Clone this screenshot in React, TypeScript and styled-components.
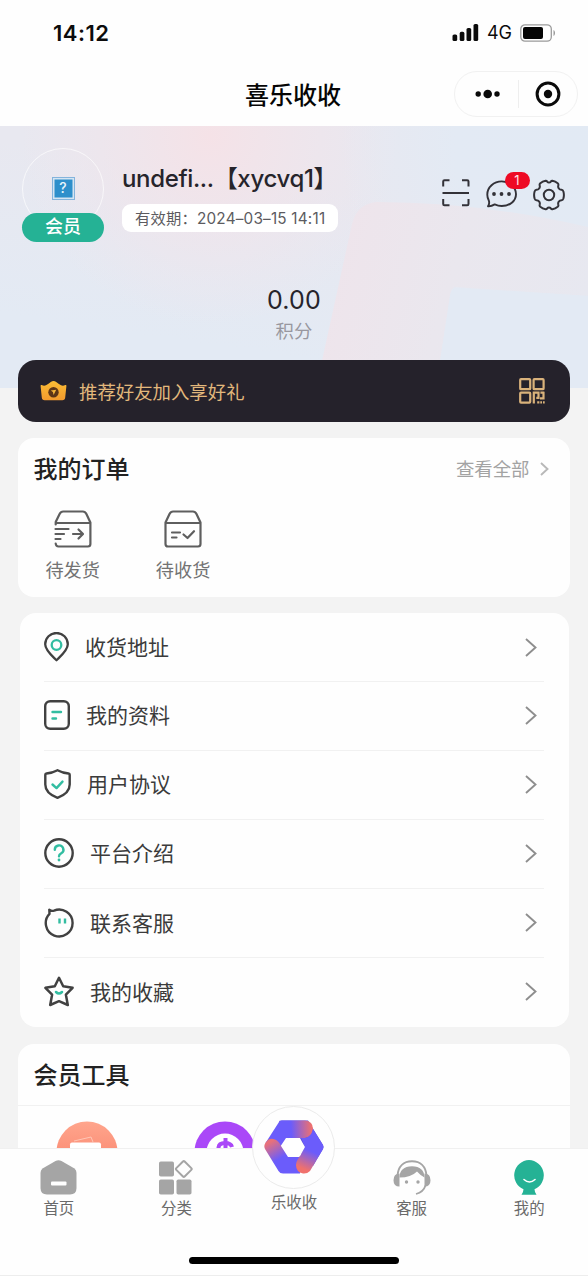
import React from "react";
import styled, { createGlobalStyle } from "styled-components";

const GlobalStyle = createGlobalStyle`
  * { box-sizing: border-box; }
  body {
    margin: 0;
    background: #f3f3f3;
    font-family: Inter, "Noto Sans CJK SC", sans-serif;
    color: #26242b;
  }
  svg { display: block; flex: none; }
`;

const Screen = styled.div`
  width: 588px;
  height: 1276px;
  display: flex;
  flex-direction: column;
  overflow: hidden;
  background: #f3f3f3;
`;

const StatusBar = styled.div`
  height: 65px;
  flex: none;
  display: flex;
  align-items: center;
  padding: 0 30px 0 53px;
  background: #fefefe;
  color: #0c0c0c;
`;

const Clock = styled.span`
  flex: 1;
  font-size: 22px;
  font-weight: 600;
  line-height: 30px;
  letter-spacing: 0.5px;
`;

const Network = styled.span`
  font-size: 18px;
  font-weight: 400;
  line-height: 30px;
  margin: 0 8px 0 8px;
`;

const NavBar = styled.div`
  height: 61px;
  flex: none;
  display: grid;
  grid-template-columns: 1fr auto 1fr;
  align-items: center;
  padding: 0 10px;
  background: #fefefe;
`;

const NavTitle = styled.h1`
  grid-column: 2;
  margin: 0 2px 0 0;
  font-size: 24px;
  line-height: 34px;
  font-weight: 500;
  color: #050505;
`;

const Capsule = styled.div`
  justify-self: end;
  width: 124px;
  height: 46px;
  margin-bottom: 3px;
  display: flex;
  align-items: center;
  border: 1px solid #f1f1f1;
  border-radius: 23px;
`;

const CapsuleHalf = styled.div`
  flex: 1;
  height: 28px;
  display: flex;
  align-items: center;
  justify-content: center;
  &:first-child { padding-left: 4px; }
  & + & { border-left: 1px solid #eeeeee; }
`;

const Hero = styled.section`
  position: relative;
  height: 262px;
  flex: none;
  background: #e8e8f0;
`;

const HeroArt = styled.svg`
  position: absolute;
  inset: 0;
`;

const HeroContent = styled.div`
  position: relative;
  display: flex;
  flex-direction: column;
`;

const Profile = styled.div`
  display: flex;
  height: 116px;
  padding: 22px 23.5px 0 22px;
`;

const Avatar = styled.div`
  width: 82px;
  height: 94px;
  display: flex;
  flex-direction: column;
  align-items: center;
`;

const AvatarRing = styled.div`
  width: 82px;
  height: 82px;
  flex: none;
  display: flex;
  align-items: center;
  justify-content: center;
  border: 1.5px solid rgba(255, 255, 255, 0.65);
  border-radius: 50%;
`;

const MissingImage = styled.div`
  width: 23px;
  height: 23px;
  margin-top: -2px;
  display: flex;
  align-items: center;
  justify-content: center;
  border: 1px solid #84b4dc;
  background: #2d8fcb;
  box-shadow: inset 0 0 0 1.5px #d4e5f3;
  color: #e8f4fb;
  font-size: 14px;
  font-weight: 500;
  line-height: 20px;
`;

const MemberTag = styled.div`
  width: 82px;
  height: 29px;
  flex: none;
  margin-top: -17px;
  position: relative;
  border-radius: 15px;
  background: #25b295;
  color: #ffffff;
  font-size: 18px;
  font-weight: 500;
  line-height: 28px;
  text-align: center;
`;

const Identity = styled.div`
  flex: 1;
  display: flex;
  flex-direction: column;
  align-items: flex-start;
  padding: 14px 0 0 18px;
`;

const UserName = styled.div`
  height: 34px;
  font-size: 24px;
  font-weight: 500;
  line-height: 34px;
  white-space: nowrap;
  letter-spacing: -0.35px;
`;

const Validity = styled.div`
  height: 28px;
  margin-top: 8px;
  width: 216px;
  padding-left: 13px;
  border-radius: 9px;
  background: #ffffff;
  color: #5c5b60;
  font-size: 15.3px;
  line-height: 29px;
  letter-spacing: 0.2px;
  white-space: nowrap;
`;

const HeroActions = styled.div`
  display: flex;
  align-items: flex-start;
  gap: 16px;
  padding-top: 31px;
`;

const MessageAction = styled.div`
  position: relative;
  padding-top: 1px;
`;

const Badge = styled.span`
  position: absolute;
  top: -7px;
  left: 19px;
  width: 25px;
  height: 17px;
  border-radius: 9px;
  background: #ee0a24;
  color: #ffe3e6;
  font-size: 13px;
  line-height: 17px;
  text-align: center;
`;

const Points = styled.div`
  margin-top: 41px;
  display: flex;
  flex-direction: column;
  align-items: center;
`;

const PointsValue = styled.div`
  font-size: 25px;
  line-height: 34px;
  letter-spacing: 0.2px;
`;

const PointsLabel = styled.div`
  font-size: 18.4px;
  line-height: 29px;
  color: #98979f;
`;

const Promo = styled.div`
  position: relative;
  height: 62px;
  flex: none;
  margin: -28px 18px 0;
  padding: 0 25px 0 22px;
  display: flex;
  align-items: center;
  border-radius: 18px;
  background: #25222b;
`;

const PromoText = styled.span`
  flex: 1;
  margin: 1px 0 0 12px;
  color: #e2b87c;
  font-size: 18.4px;
  line-height: 28px;
`;

const OrdersCard = styled.section`
  height: 159px;
  flex: none;
  margin: 16px 18px 0;
  border-radius: 16px;
  background: #fefefe;
`;

const CardHeader = styled.div<{ $height: number }>`
  height: ${(p) => p.$height}px;
  display: flex;
  align-items: center;
  justify-content: space-between;
  padding: 0 21px 0 16px;
`;

const CardTitle = styled.h2`
  margin: 2px 0 0 -0.5px;
  font-size: 24px;
  font-weight: 500;
  line-height: 34px;
  color: #222222;
`;

const MoreLink = styled.span`
  display: flex;
  align-items: center;
  gap: 10.5px;
  color: #a3a3a3;
  font-size: 18.4px;
  line-height: 28px;
`;

const OrderList = styled.div`
  display: flex;
  padding-top: 10px;
`;

const OrderItem = styled.div`
  width: 110.4px;
  display: flex;
  flex-direction: column;
  align-items: center;
  color: #737373;
  font-size: 18.2px;
  line-height: 28px;
  gap: 7.5px;
  padding-right: 1px;
`;

const MenuCard = styled.section`
  height: 414px;
  flex: none;
  margin: 16px 19px 0 20px;
  padding: 0 25px 0 24px;
  border-radius: 16px;
  background: #fefefe;
`;

const MenuRow = styled.div`
  height: 69.1px;
  display: flex;
  align-items: center;
  padding: 0 7px 1.5px 0;
  & + & { border-top: 1px solid #f1f1f1; }
  &:first-child { height: 68px; padding-bottom: 0; }
`;

const MenuLabel = styled.span`
  flex: 1;
  margin: 2px 0 0 16px;
  font-size: 21px;
  line-height: 30px;
  color: #3b3b3b;
`;

const ToolsCard = styled.section`
  height: 104px;
  flex: none;
  margin: 17px 18px 0;
  border-radius: 16px 16px 0 0;
  background: #fefefe;
  overflow: hidden;
`;

const ToolsRow = styled.div`
  display: flex;
  gap: 76px;
  padding: 15px 0 0 38px;
  border-top: 1px solid #f1f1f1;
`;

const TabBar = styled.nav`
  position: relative;
  height: 128px;
  flex: none;
  display: flex;
  flex-direction: column;
  justify-content: space-between;
  align-items: center;
  border-top: 1px solid #f0f0f0;
  border-bottom: 1px solid #ededed;
  background: #fefefe;
`;

const Tabs = styled.div`
  width: 100%;
  display: flex;
`;

const Tab = styled.div`
  flex: 1;
  padding-top: 11px;
  display: flex;
  flex-direction: column;
  align-items: center;
  color: #6a6a6a;
  font-size: 15.4px;
  line-height: 24px;
  gap: 2px;
`;

const CenterTab = styled(Tab)`
  margin-top: -43px;
  padding-top: 0;
`;

const CenterButton = styled.div`
  width: 83px;
  height: 83px;
  display: flex;
  align-items: center;
  justify-content: center;
  padding-bottom: 2px;
  border: 1px solid #ebebeb;
  border-radius: 50%;
  background: #fefefe;
`;

const HomeIndicator = styled.div`
  width: 210px;
  height: 7px;
  margin-bottom: 11px;
  border-radius: 4px;
  background: #000000;
`;

const INK = "#414141";
const TEAL = "#32bda1";

const SignalIcon = () => (
  <svg width="27" height="17" viewBox="0 0 27 17" fill="#0a0a0a">
    <rect x="0.5" y="10.500" width="4.700" height="6.500" rx="1.600" />
    <rect x="7.700" y="7.800" width="4.700" height="9.200" rx="1.600" />
    <rect x="14.500" y="4" width="4.700" height="13" rx="1.600" />
    <rect x="21.500" y="0" width="4.700" height="17" rx="1.600" />
  </svg>
);

const BatteryIcon = () => (
  <svg width="38" height="18" viewBox="0 0 38 18">
    <rect x="0.8" y="0.8" width="30.500" height="16.400" rx="4.200" fill="#fff" stroke="#9b9b9b" strokeWidth="1.300" />
    <rect x="3" y="3" width="20" height="12" rx="2" fill="#050505" />
    <path d="M33.500 6v6c2-.8 2-5.200 0-6z" fill="#9b9b9b" />
  </svg>
);

const DotsIcon = () => (
  <svg width="26" height="10" viewBox="0 0 26 10" fill="#0a0a0a">
    <circle cx="3.200" cy="5" r="2.700" />
    <circle cx="12.700" cy="5" r="4.300" />
    <circle cx="22" cy="5" r="2.700" />
  </svg>
);

const TargetIcon = () => (
  <svg width="26" height="26" viewBox="0 0 26 26">
    <circle cx="13" cy="13" r="10.900" fill="none" stroke="#0a0a0a" strokeWidth="3" />
    <circle cx="13" cy="13" r="4.200" fill="#0a0a0a" />
  </svg>
);

const ScanIcon = () => (
  <svg width="28" height="28" viewBox="0 0 28 28" fill="none" stroke="#333238" strokeWidth="2">
    <path d="M1.200 7.500V2.500Q1.200 1.200 2.500 1.200H7.500M20 1.200h5.200q1.300 0 1.300 1.300v5M26.500 20v5q0 1.300-1.300 1.300H20M7.500 26.300h-5q-1.300 0-1.300-1.300v-5M.5 14H27" />
  </svg>
);

const ChatIcon = () => (
  <svg width="31" height="28" viewBox="0 0 31 28" fill="none" stroke="#333238" strokeWidth="1.900" strokeLinejoin="round">
    <path d="M2 26.300C3 24.800 3.500 22.500 2.800 20.500A11.500 11.500 0 0 1 1.300 14.500C1.300 7.300 7.800 1.400 15.700 1.400S30 7.300 30 14.200 23.600 26 15.700 26c-2.700 0-5-.7-7-1.600C6.800 25.600 4.500 26.500 2 26.300z" />
    <g fill="#333238" stroke="none">
      <circle cx="8" cy="14" r="1.900" />
      <circle cx="15.500" cy="14" r="1.900" />
      <circle cx="23" cy="14" r="1.900" />
    </g>
  </svg>
);

const GearIcon = () => (
  <svg width="32" height="32" viewBox="0 0 32 32" fill="none" stroke="#333238" strokeWidth="2" strokeLinejoin="round">
    <path d="M12.600 1.800Q9.600 2.400 7.300 4.300Q6.300 5.200 6.700 6.500Q7.200 8.300 6.100 9.500Q5.200 10.700 3.500 10.800Q2.100 11 1.600 12.500Q.6 16 1.600 19.500Q2.100 21 3.500 21.200Q5.200 21.300 6.100 22.500Q7.200 23.700 6.700 25.500Q6.300 26.800 7.300 27.700Q9.600 29.600 12.600 30.200Q13.600 30.300 14.200 29.400Q14.900 28.500 16 28.500T17.800 29.400Q18.400 30.300 19.400 30.200Q22.400 29.600 24.700 27.700Q25.700 26.800 25.300 25.500Q24.800 23.700 25.900 22.500Q26.800 21.300 28.500 21.200Q29.900 21 30.400 19.500Q31.400 16 30.400 12.500Q29.900 11 28.500 10.800Q26.800 10.700 25.900 9.500Q24.800 8.300 25.300 6.500Q25.700 5.200 24.700 4.300Q22.400 2.400 19.400 1.800Q18.400 1.700 17.800 2.600Q17.100 3.500 16 3.500T14.200 2.600Q13.600 1.700 12.600 1.800z" />
    <circle cx="16" cy="16" r="5.200" />
  </svg>
);

const CrownIcon = () => (
  <svg width="27" height="22" viewBox="0 0 27 22">
    <defs>
      <linearGradient id="crown" x1="0" y1="0" x2="0" y2="1">
        <stop offset="0" stopColor="#fbbd35" />
        <stop offset="1" stopColor="#f29a2e" />
      </linearGradient>
    </defs>
    <path d="M.6 6Q.4 4.500 1.800 5Q4 6.200 6 5.200Q8.500 4 10.800 2Q13.500 0 16.200 2Q18.500 4 21 5.200Q23 6.200 25.200 5Q26.600 4.500 26.400 6L25.200 17.500Q25 20.300 22.300 20.300H4.700Q2 20.300 1.800 17.500z" fill="url(#crown)" />
    <circle cx="13.500" cy="12.200" r="5.200" fill="#5c3517" />
    <path d="M10.800 10.600l5.400-.8-2.600 5.200-.7-2.900z" fill="#f4b53c" />
  </svg>
);

const QrIcon = () => (
  <svg width="26" height="26" viewBox="0 0 26 26" fill="none" stroke="#d9b27b" strokeWidth="2.200">
    <rect x="1.200" y="1.200" width="10" height="10" rx="0.800" />
    <rect x="14.600" y="1.200" width="10" height="10" rx="0.800" />
    <rect x="1.200" y="14.600" width="10" height="10" rx="0.800" />
    <path d="M14.800 25.400V14.700h4.700v5.200h-2.200M21.400 14.700h4M24.500 14v6.300h-3.500M18.200 24.400h2.200M21.300 24.400h1.700M24 24.400h1.700" />
  </svg>
);

const Chevron = ({ width, height, color }: { width: number; height: number; color: string }) => (
  <svg width={width} height={height} viewBox={`0 0 ${width} ${height}`} fill="none" stroke={color} strokeWidth="1.900">
    <path d={`M1 1L${width - 1.5} ${height / 2}L1 ${height - 1}`} />
  </svg>
);

const ShipIcon = () => (
  <svg width="38" height="38" viewBox="0 0 38 38" fill="none" stroke="#5e5e5e" strokeWidth="2.200" strokeLinecap="round" strokeLinejoin="round">
    <path d="M1.700 14.500V12L5.600 4q1.200-2.500 3.600-2.500h19.600q2.400 0 3.600 2.500l4 8.500V34q0 2.500-2.500 2.500H4.500q-2.500 0-2.800-3M1.700 13H36M1.500 19h13M1.500 24H10M1.500 29h5M19 24h9.500M24.500 19.500L29 24l-4.500 4.500" />
  </svg>
);

const ReceiveIcon = () => (
  <svg width="38" height="38" viewBox="0 0 38 38" fill="none" stroke="#5e5e5e" strokeWidth="2.200" strokeLinecap="round" strokeLinejoin="round">
    <path d="M1.500 12.500L5.500 4q1.200-2.500 3.600-2.500h19.800q2.400 0 3.600 2.500l4 8.500V34q0 2.500-2.500 2.500H4q-2.500 0-2.500-2.500zM1.500 13h35M8 22.500h8M8 27.500h4.500M19.500 24.500l4 3.500 6.500-6.800" />
  </svg>
);

const PinIcon = () => (
  <svg width="25" height="30" viewBox="0 0 25 30" fill="none" strokeWidth="2.300" strokeLinejoin="round">
    <path d="M12.500 28.200C8.500 24.200 1.200 18.300 1.200 12.200a11.300 11.200 0 0 1 22.600 0c0 6.100-7.300 12-11.300 16z" stroke={INK} />
    <circle cx="12.500" cy="13" r="4.800" stroke={TEAL} />
  </svg>
);

const NoteIcon = () => (
  <svg width="26" height="30" viewBox="0 0 26 30" fill="none" strokeWidth="2.400" strokeLinecap="round">
    <rect x="1.200" y="1.200" width="23.600" height="27.600" rx="5" stroke={INK} />
    <path d="M8.500 12H17M8.500 18.500H12" stroke={TEAL} />
  </svg>
);

const ShieldIcon = () => (
  <svg width="27" height="30" viewBox="0 0 27 30" fill="none" strokeWidth="2.400" strokeLinejoin="round" strokeLinecap="round">
    <path d="M13.500 1.200Q18.500 3.900 24.500 4.500q1.200.1 1.200 1.300V15.500c0 6.500-6 11-12.200 13.300C7.300 26.500 1.300 22 1.300 15.500V5.800q0-1.200 1.200-1.300Q8.500 3.900 13.500 1.200z" stroke={INK} />
    <path d="M8.500 15.500l4 3.600 6-6.500" stroke={TEAL} />
  </svg>
);

const QuestionIcon = () => (
  <svg width="30" height="30" viewBox="0 0 30 30" fill="none" strokeWidth="2.400" strokeLinecap="round">
    <circle cx="15" cy="15" r="13.700" stroke={INK} />
    <path d="M10.800 11.700a4.300 4.200 0 1 1 6.500 3.500Q15 16.500 15 18.300" stroke={TEAL} />
    <circle cx="15" cy="22" r="1.400" fill={TEAL} stroke="none" />
  </svg>
);

const FaceIcon = () => (
  <svg width="30" height="30" viewBox="0 0 30 30" fill="none" strokeWidth="2.400" strokeLinejoin="round" strokeLinecap="round">
    <path d="M5.300 1.800L5.500 5.800A13.400 13.400 0 1 0 10 2.700Q7.500 3.300 5.300 1.800z" fill="#fefefe" stroke={INK} />
    <path d="M15.500 10.500v5M21 10.500v5" stroke={TEAL} strokeWidth="2.400" strokeLinecap="butt" />
  </svg>
);

const StarIcon = () => (
  <svg width="30" height="31" viewBox="0 0 30 31" fill="none" strokeWidth="2.500" strokeLinejoin="round" strokeLinecap="round">
    <path d="M15 1.800l4.200 8.400 9.400 1.600-6.700 6.900 1.900 10.300L15 25.200l-8.800 3.800 1.900-10.300-6.700-6.900 9.400-1.600z" stroke={INK} />
    <path d="M12 16q3 3 6 0" stroke={TEAL} />
  </svg>
);

const WalletTool = () => (
  <svg width="62" height="62" viewBox="0 0 62 62">
    <defs>
      <linearGradient id="wallet" x1="0" y1="0" x2="0" y2="1">
        <stop offset="0" stopColor="#ffa58c" />
        <stop offset="1" stopColor="#f87c66" />
      </linearGradient>
    </defs>
    <circle cx="31" cy="31" r="30.500" fill="url(#wallet)" />
    <path d="M18 20l17-4 2 5" fill="none" stroke="#ffd0c2" strokeWidth="0.800" />
    <rect x="14" y="21.500" width="31" height="24" rx="2" fill="#fff" />
  </svg>
);

const DollarTool = () => (
  <svg width="62" height="62" viewBox="0 0 62 62">
    <circle cx="31" cy="31" r="30.500" fill="#aa48f8" />
    <circle cx="31" cy="31" r="18.500" fill="#fff" />
    <path d="M38 26q-1-4-7-4t-6.500 4.500q0 4 6.500 5t7 5.500-7 5-7-4.500M31.500 17v29" fill="none" stroke="#aa48f8" strokeWidth="4" />
  </svg>
);

const HomeIcon = () => (
  <svg width="37" height="35" viewBox="0 0 37 35">
    <path d="M15.500.9q3-1.300 6 0L34.500 8.500Q36.500 10 36.500 13V28q0 6.500-6.500 6.500H7Q.5 34.500.5 28V13Q.5 10 2.500 8.500z" fill="#a5a5a5" />
    <rect x="11" y="21.500" width="15.500" height="4" rx="1" fill="#fff" />
  </svg>
);

const CategoryIcon = () => (
  <svg width="34" height="35" viewBox="0 0 34 35" fill="#a5a5a5">
    <rect x="0" y="1.500" width="15" height="15" rx="1.800" />
    <rect x="0" y="19.500" width="15" height="15" rx="1.800" />
    <rect x="17.500" y="19.500" width="15" height="15" rx="1.800" />
    <rect x="18.900" y="3.100" width="11.800" height="11.800" rx="1.200" transform="rotate(45 24.800 9)" fill="#fefefe" stroke="#a5a5a5" strokeWidth="2" />
  </svg>
);

const BrandIcon = () => (
  <svg width="60" height="54" viewBox="0 0 60 54">
    <defs>
      <linearGradient id="armTop" gradientUnits="userSpaceOnUse" x1="10" y1="10" x2="48" y2="8">
        <stop offset="0.450" stopColor="#6b5cfb" />
        <stop offset="1" stopColor="#f0716d" />
      </linearGradient>
      <linearGradient id="armLeft" gradientUnits="userSpaceOnUse" x1="24" y1="50" x2="6" y2="20">
        <stop offset="0.400" stopColor="#6b5cfb" />
        <stop offset="0.950" stopColor="#e8717a" />
      </linearGradient>
      <linearGradient id="armRight" gradientUnits="userSpaceOnUse" x1="52" y1="20" x2="38" y2="52">
        <stop offset="0.350" stopColor="#6b5cfb" />
        <stop offset="0.900" stopColor="#f0716d" />
      </linearGradient>
    </defs>
    <path d="M15 1Q16 .5 17 .5H44L59 25Q60 27 59 29L49 46L30 27z" fill="#5948d8" />
    <path d="M15 2Q16 .5 18 .5H41Q49 1 49 9T41 18H22L14 30L1.500 23z" fill="url(#armTop)" />
    <path d="M1.300 23Q5 17 11 19.500Q15 21 17 26L24 37H38L36 53.500H19Q16 53.500 14.500 51L1 29Q-.5 26 1.300 23z" fill="url(#armLeft)" />
    <path d="M49 9L59 25Q60 27 59 29L46 51Q43 54 39 53.500Q32 52 32 45Q32 42 34 39L41 27L37 18H41Q47 17 49 9z" fill="url(#armRight)" />
    <path d="M25 18H36Q38 22 41 27L36 36H25L20 27z" fill="#fff" />
  </svg>
);

const ServiceIcon = () => (
  <svg width="38" height="35" viewBox="0 0 38 35">
    <path d="M4.500 16C5 6 11 1.200 19 1.200S33 6 33.500 16" fill="none" stroke="#a5a5a5" strokeWidth="2" />
    <path d="M6.500 17.500C6.500 10.500 11 6.300 19 6.300s12.500 4.200 12.500 11.200Q28 16 24 11.500Q18 17.500 6.500 17.500z" fill="#a5a5a5" />
    <path d="M6.500 13.500v13Q.5 26.500.5 20.200T6.500 13.500zM31.500 13.500v13q6 0 6-6.300t-6-6.700z" fill="#a5a5a5" />
    <circle cx="13.500" cy="22" r="1.700" fill="#a5a5a5" />
    <circle cx="25" cy="22" r="1.700" fill="#a5a5a5" />
    <path d="M32.500 25.500Q30.500 32 23 34" fill="none" stroke="#a5a5a5" strokeWidth="1.800" />
  </svg>
);

const MineIcon = () => (
  <svg width="32" height="35" viewBox="0 0 32 35">
    <path d="M16 0a15.500 15.300 0 0 0-5.500 29.300Q10.500 32 8.500 34.700h15Q21.500 32 21.500 29.300A15.500 15.300 0 0 0 16 0z" fill="#25b295" />
    <path d="M11 19.500q5.500 5 11 0" fill="none" stroke="#fff" strokeWidth="1.600" strokeLinecap="round" />
  </svg>
);

const MENU = [
  { label: "收货地址", Icon: PinIcon },
  { label: "我的资料", Icon: NoteIcon },
  { label: "用户协议", Icon: ShieldIcon },
  { label: "平台介绍", Icon: QuestionIcon },
  { label: "联系客服", Icon: FaceIcon },
  { label: "我的收藏", Icon: StarIcon },
];

export default function App() {
  return (
    <>
      <GlobalStyle />
      <Screen>
        <StatusBar>
          <Clock>14:12</Clock>
          <SignalIcon />
          <Network>4G</Network>
          <BatteryIcon />
        </StatusBar>
        <NavBar>
          <NavTitle>喜乐收收</NavTitle>
          <Capsule>
            <CapsuleHalf><DotsIcon /></CapsuleHalf>
            <CapsuleHalf><TargetIcon /></CapsuleHalf>
          </Capsule>
        </NavBar>

        <Hero>
          <HeroArt width="588" height="262" viewBox="0 0 588 262">
            <defs>
              <radialGradient id="rose" gradientUnits="userSpaceOnUse" cx="210" cy="10" r="190">
                <stop offset="0" stopColor="#f5e2e7" />
                <stop offset="1" stopColor="#f3e4ea" stopOpacity="0" />
              </radialGradient>
              <radialGradient id="skyRight" gradientUnits="userSpaceOnUse" cx="570" cy="20" r="230">
                <stop offset="0" stopColor="#e2eaf4" />
                <stop offset="0.500" stopColor="#e3eaf4" />
                <stop offset="1" stopColor="#e4eaf4" stopOpacity="0" />
              </radialGradient>
              <linearGradient id="skyLow" x1="0.600" y1="0.250" x2="0.350" y2="1">
                <stop offset="0" stopColor="#e3eaf4" stopOpacity="0" />
                <stop offset="0.800" stopColor="#e3eaf4" />
              </linearGradient>
              <linearGradient id="petal" x1="0" y1="0.300" x2="1" y2="0.500">
                <stop offset="0" stopColor="#efe4eb" />
                <stop offset="0.500" stopColor="#eae7ee" />
                <stop offset="1" stopColor="#e7e8f0" />
              </linearGradient>
            </defs>
            <rect width="588" height="262" fill="url(#skyLow)" />
            <rect width="588" height="262" fill="url(#rose)" />
            <rect width="588" height="262" fill="url(#skyRight)" />
            <path d="M316 262L352 98Q357 78 376 76Q480 76 588 101V170L455 161Q451 162 450 170L436 262z" fill="url(#petal)" />
            <path d="M436 262L450 170Q451 161 460 162L588 170V262z" fill="#e3eaf4" />
          </HeroArt>
          <HeroContent>
            <Profile>
              <Avatar>
                <AvatarRing><MissingImage>?</MissingImage></AvatarRing>
                <MemberTag>会员</MemberTag>
              </Avatar>
              <Identity>
                <UserName>undefi...【xycvq1】</UserName>
                <Validity>有效期：2024–03–15 14:11</Validity>
              </Identity>
              <HeroActions>
                <ScanIcon />
                <MessageAction>
                  <ChatIcon />
                  <Badge>1</Badge>
                </MessageAction>
                <GearIcon />
              </HeroActions>
            </Profile>
            <Points>
              <PointsValue>0.00</PointsValue>
              <PointsLabel>积分</PointsLabel>
            </Points>
          </HeroContent>
        </Hero>

        <Promo>
          <CrownIcon />
          <PromoText>推荐好友加入享好礼</PromoText>
          <QrIcon />
        </Promo>

        <OrdersCard>
          <CardHeader $height={62}>
            <CardTitle>我的订单</CardTitle>
            <MoreLink>
              查看全部
              <Chevron width={9} height={14} color="#b8b8b8" />
            </MoreLink>
          </CardHeader>
          <OrderList>
            <OrderItem><ShipIcon />待发货</OrderItem>
            <OrderItem><ReceiveIcon />待收货</OrderItem>
          </OrderList>
        </OrdersCard>

        <MenuCard>
          {MENU.map(({ label, Icon }) => (
            <MenuRow key={label}>
              <Icon />
              <MenuLabel>{label}</MenuLabel>
              <Chevron width={12} height={19} color="#8e8e8e" />
            </MenuRow>
          ))}
        </MenuCard>

        <ToolsCard>
          <CardHeader $height={61}>
            <CardTitle>会员工具</CardTitle>
          </CardHeader>
          <ToolsRow>
            <WalletTool />
            <DollarTool />
          </ToolsRow>
        </ToolsCard>

        <TabBar>
          <Tabs>
            <Tab><HomeIcon />首页</Tab>
            <Tab><CategoryIcon />分类</Tab>
            <CenterTab>
              <CenterButton><BrandIcon /></CenterButton>
              乐收收
            </CenterTab>
            <Tab><ServiceIcon />客服</Tab>
            <Tab><MineIcon />我的</Tab>
          </Tabs>
          <HomeIndicator />
        </TabBar>
      </Screen>
    </>
  );
}
